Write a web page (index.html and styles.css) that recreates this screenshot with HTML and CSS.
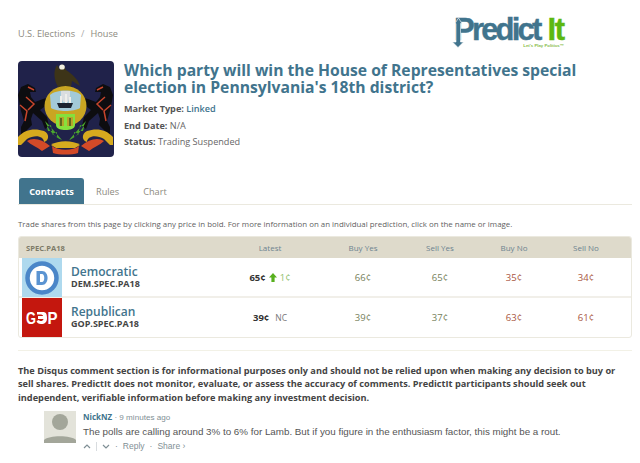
FILE: index.html
```html
<!DOCTYPE html>
<html lang="en">
<head>
<meta charset="utf-8">
<title>PredictIt</title>
<link rel="stylesheet" href="styles.css">
</head>
<body>
<div class="page">
  <header class="top">
    <nav class="crumbs"><span>U.S. Elections</span><span class="sep">/</span><span>House</span></nav>
    <div class="logo">
      <div class="logo-name"><span class="logo-p">Predict</span><span class="logo-it">It</span></div>
      <div class="logo-tag">Let's Play Politics™</div>
      <svg class="logo-arrow" viewBox="0 0 12 30" width="12" height="30"><path d="M6.5 0 L10 5.5 H8.5 V24 H11.5 L6 29.5 L0.5 24 H4 V5.5 H3 Z" fill="#41748d" stroke="#fff" stroke-width="0.6"/></svg>
    </div>
  </header>

  <section class="market">
    <svg class="seal" viewBox="0 0 96 96" width="96" height="96">
      <defs>
        <g id="horse">
          <path d="M3 26 L10 23 L17 27 L18 31 L12 31 L13 36 L17 41 L25 38 L32 36 L33 40 L26 46 L22 49 L29 56 L31 65 L27 68 L24 60 L15 52 L13 58 L14 64 L8 70 L7 76 L3 76 L3 66 L6 60 L3 50 L1 40 L0 34 Z" fill="#0d0d10"/>
          <path d="M2 44 L9 50 L7 60 M8 36 L16 43 L10 49 M10 26 L16 29" stroke="#c8452c" stroke-width="1.5" fill="none"/>
        </g>
        <g id="wing">
          <path d="M27 60 C30 68 36 76 44 79 C38 72 33 66 27 60 Z M29 66 L33 64 L34 70 L30 70 Z M34 73 L39 71 L39 76 Z" fill="#4aa52e"/>
          <path d="M0 76 C7 68 17 67 26 70 C32 73 31 80 26 81 C26 75 17 73 9 78 L3 84 L0 84 Z" fill="#d6aa1e"/>
          <path d="M9 80 C15 76 24 78 32 85 L24 90 C19 86 13 84 9 80 Z" fill="#d34a28"/>
        </g>
      </defs>
      <rect width="96" height="96" rx="4" fill="#20224a"/>
      <use href="#horse"/>
      <use href="#horse" transform="translate(95,0) scale(-1,1)"/>
      <path d="M40 26 C36 19 35 10 39 4 L42 9 L45 3 L48 9 C54 13 60 18 62 25 L54 20 L53 26 Z" fill="#3d3418"/>
      <ellipse cx="44" cy="6" rx="2.8" ry="2.6" fill="#f2efe0"/>
      <ellipse cx="47.5" cy="45" rx="21" ry="20" fill="#c9a522"/>
      <path d="M32 34 C38 28 57 28 63 34 L62 47 C56 51 39 51 33 47 Z" fill="#a3cad8"/>
      <path d="M43 35 V30 H52 V35 L50 41 H45 Z" fill="#d9dde0"/>
      <path d="M39 42 H55 L53 47 H41 Z" fill="#1c2430"/>
      <path d="M42 42 V35 H44 V42 M47 42 V33 H49 V42 M51 42 V36 H53 V42" fill="#eeeeea"/>
      <path d="M38 53 H57 V64 C57 68 52 69 47.5 69 C43 69 38 68 38 64 Z" fill="#86e03c"/>
      <path d="M41 56 H46 V65 H41 Z M49 56 H55 V65 H49 Z" fill="#b5a52a"/>
      <path d="M43 57 V65 M52 57 V65" stroke="#27401a" stroke-width="1.2"/>
      <use href="#wing"/>
      <use href="#wing" transform="translate(95,0) scale(-1,1)"/>
      <path d="M33 84 C40 79 55 79 62 84 L57 87 H38 Z" fill="#d6aa1e"/>
      <path d="M34 85 C40 90 55 90 61 85 L60 92 C54 94 41 94 35 92 Z" fill="#d34a28"/>
    </svg>
    <div class="market-info">
      <h1 class="market-title">Which party will win the House of Representatives special election in Pennsylvania's 18th district?</h1>
      <p class="meta"><b>Market Type:</b> <span class="link">Linked</span></p>
      <p class="meta"><b>End Date:</b> N/A</p>
      <p class="meta"><b>Status:</b> Trading Suspended</p>
    </div>
  </section>

  <div class="tabs">
    <span class="tab active">Contracts</span>
    <span class="tab">Rules</span>
    <span class="tab">Chart</span>
  </div>

  <p class="hint">Trade shares from this page by clicking any price in bold. For more information on an individual prediction, click on the name or image.</p>

  <div class="board">
    <div class="row head">
      <div class="group">SPEC.PA18</div>
      <div>Latest</div><div>Buy Yes</div><div>Sell Yes</div><div>Buy No</div><div>Sell No</div>
    </div>
    <div class="row item">
      <div class="contract">
        <svg class="pic" viewBox="0 0 40 39" width="40" height="39">
          <rect width="40" height="39" fill="#aed9ee"/>
          <circle cx="20" cy="20" r="14.5" fill="#fff" stroke="#4a86c8" stroke-width="4.5"/>
          <path d="M14.5 13 H20 C27.5 13 27.5 27 20 27 H14.5 Z M18 16 V24 H20 C23 24 23 16 20 16 Z" fill="#5b94d2" fill-rule="evenodd"/>
        </svg>
        <div class="c-id"><div class="c-name">Democratic</div><div class="c-tick">DEM.SPEC.PA18</div></div>
      </div>
      <div class="latest"><b>65¢</b><svg class="up" viewBox="0 0 8 9" width="8" height="9"><path d="M4 0 L8 4.5 H5.6 V9 H2.4 V4.5 H0 Z" fill="#58b01e"/></svg><span class="chg">1¢</span></div>
      <div class="yes">66¢</div><div class="yes">65¢</div><div class="no">35¢</div><div class="no">34¢</div>
    </div>
    <div class="row item">
      <div class="contract">
        <svg class="pic" viewBox="0 0 40 39" width="40" height="39">
          <rect width="40" height="39" fill="#c4170e"/>
          <text x="4" y="26" class="gop" textLength="10" lengthAdjust="spacingAndGlyphs">G</text>
          <path d="M15 14 H21 C24 14 25 16 25 20 C25 24 23 26 19 26 C16.5 26 15 25 14.5 23 L17 22 C17.5 23.5 21 23.5 21.5 21 H16 V18 H21 C21 17 20 16.5 18 16.5 H15 Z" fill="#fff"/>
          <text x="25.5" y="26" class="gop" textLength="10" lengthAdjust="spacingAndGlyphs">P</text>
        </svg>
        <div class="c-id"><div class="c-name">Republican</div><div class="c-tick">GOP.SPEC.PA18</div></div>
      </div>
      <div class="latest"><b>39¢</b><span class="nc">NC</span></div>
      <div class="yes">39¢</div><div class="yes">37¢</div><div class="no">63¢</div><div class="no">61¢</div>
    </div>
  </div>

  <hr class="rule">

  <p class="notice">The Disqus comment section is for informational purposes only and should not be relied upon when making any decision to buy or sell shares. PredictIt does not monitor, evaluate, or assess the accuracy of comments. PredictIt participants should seek out independent, verifiable information before making any investment decision.</p>

  <div class="comment">
    <svg class="avatar" viewBox="0 0 32 32" width="32" height="32">
      <rect width="32" height="32" fill="#e3e3da"/>
      <circle cx="16" cy="11" r="8" fill="#a3a69a"/>
      <path d="M0 32 V29 C5 24 27 24 32 29 V32 Z" fill="#a3a69a"/>
    </svg>
    <div class="c-body">
      <div class="c-head"><b>NickNZ</b><span class="c-time"> · 9 minutes ago</span></div>
      <div class="c-text">The polls are calling around 3% to 6% for Lamb. But if you figure in the enthusiasm factor, this might be a rout.</div>
      <div class="c-acts">
        <svg viewBox="0 0 8 5" width="8" height="5"><path d="M1 4 L4 1 L7 4" fill="none" stroke="#7f8f95" stroke-width="1.2"/></svg>
        <i class="bar"></i>
        <svg viewBox="0 0 8 5" width="8" height="5"><path d="M1 1 L4 4 L7 1" fill="none" stroke="#7f8f95" stroke-width="1.2"/></svg>
        <span>·</span><span>Reply</span><span>·</span><span>Share ›</span>
      </div>
    </div>
  </div>
</div>
</body>
</html>
```

FILE: styles.css
```css
* { box-sizing: border-box; }
html, body { margin: 0; padding: 0; background: #fff; }
body { font-family: "Open Sans", sans-serif; color: #555; overflow: hidden; height: 463px; }
.page { width: 614px; margin-left: 18px; }

.top { display: flex; height: 61px; }
.crumbs { width: 434px; padding-top: 27px; font-size: 9.2px; line-height: 14px; color: #8d8a7e; }
.sep { margin: 0 6px; color: #aaa; }
.logo { position: relative; width: 112px; padding-top: 17px; height: 50px; }
.logo-arrow { position: absolute; left: 0; top: 18px; }
.logo-name { display: flex; justify-content: space-between; font: 700 31px/26px "Liberation Sans", sans-serif; color: #41748d; -webkit-text-stroke: 0.4px currentColor; }
.logo-p { letter-spacing: -2.8px; margin-left: 2px; }
.logo-it { color: #5cb811; letter-spacing: -1.2px; }
.logo-tag { font: 700 4.3px/6px "Liberation Sans", sans-serif; color: #86bb4a; text-align: right; }

.market { display: flex; height: 117px; }
.seal { flex: none; margin-right: 10px; }
.market-title { margin: 1px 0 5px; font-size: 15.7px; line-height: 17px; font-weight: 700; color: #41748d; width: 470px; }
.meta { margin: 0; font-size: 9.15px; line-height: 16.5px; color: #666; }
.meta b { color: #555; font-weight: 700; }
.link { color: #41748d; font-weight: 600; }

.tabs { display: flex; height: 27px; border-bottom: 1px solid #ebe9df; }
.tab { padding: 0 12px; font-size: 9.2px; line-height: 27px; color: #8d8a7e; }
.tab.active { width: 65px; margin-left: 1px; padding: 0; text-align: center; background: #41748d; color: #fff; font-weight: 700; border-radius: 3px 3px 0 0; }

.hint { margin: 13px 0 5px; font-size: 7.9px; line-height: 13px; color: #5f5f5f; }

.board { border: 1px solid #ebe9df; border-radius: 3px; width: 614px; }
.row { display: grid; grid-template-columns: 195px 112px 74px 80px 68px 76px; align-items: center; text-align: center; }
.head { height: 21px; background: #dedacb; font-size: 8px; color: #6d8390; border-radius: 2px 2px 0 0; }
.group { text-align: left; padding-left: 7px; font-weight: 700; font-size: 7.6px; color: #7d7a68; }
.item { height: 40px; border-bottom: 2px solid #f1efe9; font-size: 9.5px; }
.item:last-child { height: 39px; border-bottom: 0; }
.contract { display: flex; align-items: center; text-align: left; padding-left: 3px; height: 39px; }
.pic { flex: none; margin-right: 9px; }
.gop { font: 700 17px "Liberation Sans", sans-serif; fill: #fff; }
.c-id { margin-top: -1px; }
.c-name { font-size: 12px; line-height: 13px; font-weight: 600; color: #41748d; }
.c-tick { font-size: 9px; line-height: 12px; font-weight: 700; color: #444; }
.latest { display: flex; justify-content: center; align-items: center; gap: 3px; }
.latest b { color: #333; }
.chg { color: #8fbf6d; }
.nc { color: #777; font-size: 8.5px; margin-left: 3px; }
.yes { color: #75805a; }
.no { color: #a8563f; }

.rule { margin: 12px 0 0; border: 0; border-top: 1px solid #f2f1e6; }

.notice { margin: 13px 0 7px; width: 614px; font-size: 9.2px; line-height: 13.4px; font-weight: 700; color: #444; }

.comment { display: flex; margin-left: 26px; }
.avatar { flex: none; margin-right: 7px; }
.c-head { font: 8.1px/13px "Liberation Sans", sans-serif; color: #7f8f95; }
.c-head b { color: #41748d; font: 700 8px "Open Sans", sans-serif; }
.c-text { font: 9.8px/16px "Liberation Sans", sans-serif; color: #555; white-space: nowrap; }
.c-acts { display: flex; align-items: center; gap: 5px; font: 8.5px/13px "Liberation Sans", sans-serif; color: #7f8f95; }
.bar { width: 1px; height: 9px; background: #d8dcdf; }
```
